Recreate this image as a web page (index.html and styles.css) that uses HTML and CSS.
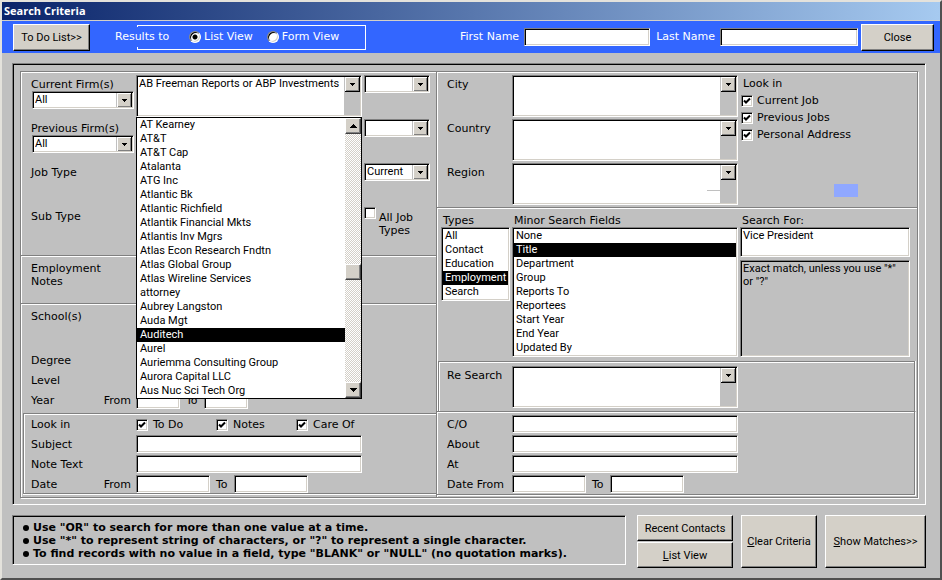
FILE: index.html
```html
<!DOCTYPE html>
<html lang="en">
<head>
    <meta charset="UTF-8">
    <meta name="viewport" content="width=device-width, initial-scale=1.0">
    <title>Search Criteria</title>
    <link rel="stylesheet" href="styles.css">
</head>
<body>
<form class="window" onsubmit="return false">
    <h1 class="title">Search Criteria</h1>

    <!-- Top bar -->
    <div class="topbar">
        <button type="button" class="btn btn-todo">To Do List&gt;&gt;</button>
        <span class="results-label" id="results-label">Results to</span>
        <div class="results" role="radiogroup" aria-labelledby="results-label">
            <label><input type="radio" name="view" checked>List View</label>
            <label><input type="radio" name="view">Form View</label>
        </div>
        <label class="name-label" for="first-name">First Name</label>
        <input type="text" class="field first-name" id="first-name">
        <label class="name-label" for="last-name">Last Name</label>
        <input type="text" class="field last-name" id="last-name">
        <button type="button" class="btn btn-close">Close</button>
    </div>

    <div class="panel">
        <div class="frame">

            <!-- Left side -->
            <div class="left">
                <div class="section jobs">
                    <div class="row tall-row">
                        <div class="firm">
                            <label for="current-mode">Current Firm(s)</label>
                            <select class="field combo" id="current-mode"><option>All</option></select>
                        </div>
                        <div class="picker">
                            <select class="field combo tall" aria-label="Current firm"><option>AB Freeman Reports or ABP Investments</option></select>
                            <div class="dropdown">
                                <ul class="firms" role="listbox" aria-label="Firms">
                                    <li role="option">AT Kearney</li>
                                    <li role="option">AT&amp;T</li>
                                    <li role="option">AT&amp;T Cap</li>
                                    <li role="option">Atalanta</li>
                                    <li role="option">ATG Inc</li>
                                    <li role="option">Atlantic Bk</li>
                                    <li role="option">Atlantic Richfield</li>
                                    <li role="option">Atlantik Financial Mkts</li>
                                    <li role="option">Atlantis Inv Mgrs</li>
                                    <li role="option">Atlas Econ Research Fndtn</li>
                                    <li role="option">Atlas Global Group</li>
                                    <li role="option">Atlas Wireline Services</li>
                                    <li role="option">attorney</li>
                                    <li role="option">Aubrey Langston</li>
                                    <li role="option">Auda Mgt</li>
                                    <li role="option" aria-selected="true">Auditech</li>
                                    <li role="option">Aurel</li>
                                    <li role="option">Auriemma Consulting Group</li>
                                    <li role="option">Aurora Capital LLC</li>
                                    <li role="option">Aus Nuc Sci Tech Org</li>
                                </ul>
                                <div class="scrollbar">
                                    <button type="button" class="scroll-btn" aria-label="Scroll up"><svg width="7" height="4" viewBox="0 0 7 4"><path d="M3 0h1v1h1v1h1v1h1v1H0V3h1V2h1V1h1z"/></svg></button>
                                    <span class="thumb"></span>
                                    <button type="button" class="scroll-btn scroll-down" aria-label="Scroll down"><svg width="7" height="4" viewBox="0 0 7 4"><path d="M0 0h7v1H6v1H5v1H4v1H3V3H2V2H1V1H0z"/></svg></button>
                                </div>
                            </div>
                        </div>
                        <select class="field combo small" aria-label="Current firm status"><option></option></select>
                    </div>
                    <div class="row tall-row">
                        <div class="firm">
                            <label for="previous-mode">Previous Firm(s)</label>
                            <select class="field combo" id="previous-mode"><option>All</option></select>
                        </div>
                        <select class="field combo tall" aria-label="Previous firm"><option></option></select>
                        <select class="field combo small" aria-label="Previous firm status"><option></option></select>
                    </div>
                    <div class="row tall-row">
                        <label for="job-type">Job Type</label>
                        <select class="field combo tall" id="job-type"><option></option></select>
                        <select class="field combo small" aria-label="Job type status"><option>Current</option></select>
                    </div>
                    <div class="row tall-row">
                        <label for="sub-type">Sub Type</label>
                        <select class="field combo tall" id="sub-type"><option></option></select>
                        <label class="all-jobs"><input type="checkbox"><span>All Job Types</span></label>
                    </div>
                </div>

                <div class="section notes">
                    <div class="row">
                        <label class="two-lines" for="emp-notes">Employment Notes</label>
                        <textarea class="field tall" id="emp-notes"></textarea>
                    </div>
                </div>

                <div class="section school">
                    <div class="row tall-row">
                        <label for="school">School(s)</label>
                        <select class="field combo tall" id="school"><option></option></select>
                    </div>
                    <div class="row">
                        <label for="degree">Degree</label>
                        <input type="text" class="field" id="degree">
                    </div>
                    <div class="row">
                        <label for="level">Level</label>
                        <input type="text" class="field" id="level">
                    </div>
                    <div class="row">
                        <div class="from-label"><span>Year</span><label for="year-from">From</label></div>
                        <div class="range">
                            <input type="text" class="field year" id="year-from">
                            <label for="year-to">To</label>
                            <input type="text" class="field year" id="year-to">
                        </div>
                    </div>
                </div>

                <div class="section note-search">
                    <div class="row">
                        <span>Look in</span>
                        <div class="checks">
                            <label><input type="checkbox" checked>To Do</label>
                            <label><input type="checkbox" checked>Notes</label>
                            <label><input type="checkbox" checked>Care Of</label>
                        </div>
                    </div>
                    <div class="row">
                        <label for="subject">Subject</label>
                        <input type="text" class="field" id="subject">
                    </div>
                    <div class="row">
                        <label for="note-text">Note Text</label>
                        <input type="text" class="field" id="note-text">
                    </div>
                    <div class="row">
                        <div class="from-label"><span>Date</span><label for="note-from">From</label></div>
                        <div class="range">
                            <input type="text" class="field date" id="note-from">
                            <label for="note-to">To</label>
                            <input type="text" class="field date" id="note-to">
                        </div>
                    </div>
                </div>
            </div>

            <!-- Right side -->
            <div class="right">
                <div class="section places">
                    <div class="place-rows">
                        <div class="row tall-row">
                            <label for="city">City</label>
                            <select class="field combo tall" id="city"><option></option></select>
                        </div>
                        <div class="row tall-row">
                            <label for="country">Country</label>
                            <select class="field combo tall" id="country"><option></option></select>
                        </div>
                        <div class="row tall-row">
                            <label for="region">Region</label>
                            <select class="field combo tall" id="region"><option></option></select>
                        </div>
                    </div>
                    <div class="look-in">
                        <span>Look in</span>
                        <label><input type="checkbox" checked>Current Job</label>
                        <label><input type="checkbox" checked>Previous Jobs</label>
                        <label><input type="checkbox" checked>Personal Address</label>
                    </div>
                    <span class="dash"></span>
                    <span class="marker"></span>
                </div>

                <div class="section fields">
                    <div>
                        <label for="types">Types</label>
                        <select class="field list" id="types" size="5">
                            <option>All</option>
                            <option>Contact</option>
                            <option>Education</option>
                            <option selected>Employment</option>
                            <option>Search</option>
                        </select>
                    </div>
                    <div>
                        <label for="minor">Minor Search Fields</label>
                        <select class="field list" id="minor" size="9">
                            <option>None</option>
                            <option selected>Title</option>
                            <option>Department</option>
                            <option>Group</option>
                            <option>Reports To</option>
                            <option>Reportees</option>
                            <option>Start Year</option>
                            <option>End Year</option>
                            <option>Updated By</option>
                        </select>
                    </div>
                    <div class="search-for">
                        <label for="search-for">Search For:</label>
                        <textarea class="field" id="search-for">Vice President</textarea>
                        <p class="field hint">Exact match, unless you use "*" or "?"</p>
                    </div>
                </div>

                <div class="section research">
                    <div class="row">
                        <label for="research">Re Search</label>
                        <select class="field combo tall" id="research"><option></option></select>
                    </div>
                </div>

                <div class="section about">
                    <div class="row">
                        <label for="care-of">C/O</label>
                        <input type="text" class="field" id="care-of">
                    </div>
                    <div class="row">
                        <label for="about">About</label>
                        <input type="text" class="field" id="about">
                    </div>
                    <div class="row">
                        <label for="at">At</label>
                        <input type="text" class="field" id="at">
                    </div>
                    <div class="row">
                        <label for="date-from">Date From</label>
                        <div class="range">
                            <input type="text" class="field date" id="date-from">
                            <label for="date-to">To</label>
                            <input type="text" class="field date" id="date-to">
                        </div>
                    </div>
                </div>
            </div>
        </div>
    </div>

    <!-- Tips and buttons -->
    <div class="footer">
        <ul class="tips">
            <li>Use "OR" to search for more than one value at a time.</li>
            <li>Use "*" to represent string of characters, or "?" to represent a single character.</li>
            <li>To find records with no value in a field, type "BLANK" or "NULL" (no quotation marks).</li>
        </ul>
        <div class="stack">
            <button type="button" class="btn">Recent Contacts</button>
            <button type="button" class="btn"><u>L</u>ist View</button>
        </div>
        <button type="button" class="btn btn-clear"><u>C</u>lear Criteria</button>
        <button type="submit" class="btn btn-show"><u>S</u>how Matches&gt;&gt;</button>
    </div>
</form>
</body>
</html>
```
FILE: styles.css
```css
* {
    box-sizing: border-box;
}
body {
    margin: 0;
    background-color: #c0c0c0;
    font-family: "DejaVu Sans", Verdana, sans-serif;
    font-size: 11px;
    line-height: 20px;
    color: #000;
}
.window {
    min-height: 100vh;
    border: 2px solid #e4e2dc;
    border-right-color: #505050;
    border-bottom-color: #505050;
}
.title {
    margin: 0;
    padding-left: 2px;
    height: 19px;
    border-bottom: 1px solid #d4d0c8;
    background: linear-gradient(to right, #0a246a, #a6caf0);
    color: #fff;
    font: bold 11px/18px "Open Sans", Tahoma, sans-serif;
}

/* Buttons */
.btn {
    padding: 0;
    border: 1px solid #fff;
    border-right-color: #000;
    border-bottom-color: #000;
    box-shadow: inset -1px -1px #808080;
    background-color: #d4d0c8;
    color: #000;
    font: 11px Roboto, Arial, sans-serif;
}

/* Sunken boxes */
.field {
    display: block;
    width: 100%;
    height: 18px;
    margin: 0;
    padding: 0 2px;
    border: 1px solid #808080;
    border-right-color: #fff;
    border-bottom-color: #fff;
    border-radius: 0;
    box-shadow: inset 1px 1px #000, inset -1px -1px #d4d0c8;
    background-color: #fff;
    color: #000;
    font: 11px/14px Roboto, Arial, sans-serif;
    outline: none;
    resize: none;
}
.combo {
    appearance: none;
    background-image:
        url("data:image/svg+xml,%3Csvg xmlns='http://www.w3.org/2000/svg' width='15' height='15' shape-rendering='crispEdges'%3E%3Cpath fill='%23000' d='M0 0h15v15H0z'/%3E%3Cpath fill='%23fff' d='M0 0h14v14H0z'/%3E%3Cpath fill='%23808080' d='M1 1h13v13H1z'/%3E%3Cpath fill='%23d4d0c8' d='M1 1h12v12H1z'/%3E%3Cpath d='M5 6h5v1H9v1H8v1H7V8H6V7H5z'/%3E%3C/svg%3E"),
        linear-gradient(#c0c0c0, #c0c0c0);
    background-repeat: no-repeat;
    background-position: right 1px top 1px, right 1px top 1px;
    background-size: 15px 15px, 16px 100%;
}
.tall {
    height: 42px;
    padding-bottom: 24px;
}
.small {
    width: 66px;
    margin-left: 2px;
}

input[type="checkbox"],
input[type="radio"] {
    appearance: none;
    flex: none;
    width: 12px;
    height: 12px;
    margin: 0;
    border: 1px solid #808080;
    border-right-color: #fff;
    border-bottom-color: #fff;
    box-shadow: inset 1px 1px #000, inset -1px -1px #d4d0c8;
    background: #fff center no-repeat;
}
input[type="checkbox"]:checked {
    background-image: url("data:image/svg+xml,%3Csvg xmlns='http://www.w3.org/2000/svg' width='8' height='8'%3E%3Cpath d='M1 3.5l2 2L7 1.500' fill='none' stroke='%23000' stroke-width='2'/%3E%3C/svg%3E");
}
input[type="radio"] {
    border-radius: 50%;
}
input[type="radio"]:checked {
    background-image: radial-gradient(circle, #000 2px, transparent 3px);
}

/* Top bar */
.topbar {
    display: flex;
    align-items: center;
    height: 32px;
    padding: 0 6px 0 11px;
    background-color: #3366ff;
    color: #fff;
}
.btn-todo {
    width: 77px;
    height: 27px;
}
.results-label {
    position: relative;
    width: 60px;
    margin-left: 25px;
    background-color: #3366ff;
    white-space: nowrap;
}
.results {
    display: flex;
    align-items: center;
    gap: 14px;
    width: 229px;
    height: 25px;
    margin-left: -38px;
    margin-right: auto;
    padding-left: 51px;
    border: 1px solid #fff;
}
.results label {
    display: flex;
    align-items: center;
    gap: 3px;
    white-space: nowrap;
}
.name-label {
    margin-right: 5px;
    white-space: nowrap;
}
.first-name {
    width: 126px;
    margin-right: 6px;
}
.last-name {
    width: 138px;
    margin-right: 3px;
}
.btn-close {
    width: 73px;
    height: 27px;
}

/* Main panel */
.panel {
    margin: 10px 14px 0 10px;
    padding: 7px 7px 6px;
    border: 1px solid #808080;
    border-right-color: #fff;
    border-bottom-color: #fff;
    box-shadow: inset 1px 1px #000;
}
.frame {
    display: grid;
    grid-template-columns: 415px 1fr;
    border: 1px solid #808080;
    box-shadow: inset 1px 1px #fff, 1px 1px #fff;
}
.right {
    border-left: 1px solid #808080;
    box-shadow: inset 1px 0 #fff;
}
.section {
    padding: 3px 0 0 10px;
    border-top: 1px solid #808080;
    box-shadow: inset 0 1px #fff;
}
.jobs,
.places {
    border-top: none;
}
.row {
    display: grid;
    grid-template-columns: 105px 226px 1fr;
    align-items: start;
}
.tall-row {
    min-height: 44px;
}
.firm {
    width: 103px;
}
.firm label {
    display: block;
    height: 16px;
}
.firm .combo {
    width: 102px;
    margin-left: 1px;
}
.from-label {
    display: flex;
    justify-content: space-between;
    padding-right: 5px;
}
.range {
    display: flex;
    gap: 6px;
}
.range .year {
    width: 44px;
}
.range .date {
    width: 74px;
}

/* Left side */
.jobs {
    height: 183px;
}
.notes {
    height: 48px;
}
.two-lines {
    width: 80px;
    padding-top: 3px;
    line-height: 13px;
}
.school {
    height: 108px;
}
.all-jobs {
    display: flex;
    gap: 3px;
    padding-left: 2px;
}
.all-jobs span {
    width: 46px;
    padding-top: 4px;
    line-height: 13px;
}
.note-search {
    height: 81px;
    margin: 2px 0 2px 2px;
    padding: 1px 0 0 7px;
    border: 1px solid #808080;
    border-right: none;
    box-shadow: inset 1px 1px #fff, 0 1px #fff;
}
.checks {
    display: flex;
}
.checks label {
    display: flex;
    flex: none;
    align-items: center;
    gap: 5px;
    width: 80px;
    white-space: nowrap;
}

/* Open list of firms, lies over the rows below */
.picker {
    position: relative;
}
.dropdown {
    position: absolute;
    top: 100%;
    left: 0;
    z-index: 1;
    display: flex;
    width: 226px;
    border: 1px solid #000;
    background-color: #fff;
}
.firms {
    flex: 1;
    margin: 0;
    padding: 0;
    list-style: none;
    font: 11px/14px Roboto, Arial, sans-serif;
}
.firms li {
    padding-left: 3px;
}
.firms li[aria-selected="true"] {
    background-color: #000;
    color: #fff;
}
.scrollbar {
    display: flex;
    flex-direction: column;
    width: 16px;
    background: repeating-conic-gradient(#fff 0 25%, #d4d0c8 0 50%) 0 0 / 2px 2px;
}
.scroll-btn,
.thumb {
    display: flex;
    align-items: center;
    justify-content: center;
    height: 16px;
    padding: 0;
    border: 1px solid #fff;
    border-right-color: #404040;
    border-bottom-color: #404040;
    box-shadow: inset -1px -1px #808080;
    background-color: #d4d0c8;
}
.thumb {
    margin-top: 130px;
}
.scroll-down {
    margin-top: auto;
}

/* Right side */
.right .row {
    grid-template-columns: 65px 226px 1fr;
}
.places {
    position: relative;
    display: flex;
    height: 135px;
}
.look-in {
    padding-left: 3px;
    line-height: 17px;
}
.look-in span {
    display: block;
    padding-left: 2px;
}
.look-in label {
    display: flex;
    align-items: center;
    gap: 4px;
}
.dash {
    position: absolute;
    top: 118px;
    right: 197px;
    width: 13px;
    height: 1px;
    background-color: #c0c0c0;
}
.marker {
    position: absolute;
    top: 112px;
    right: 59px;
    width: 24px;
    height: 13px;
    background-color: #90a8ff;
}
.fields {
    display: grid;
    grid-template-columns: 69px 226px 170px;
    column-gap: 2px;
    height: 152px;
    padding-left: 4px;
}
.fields label {
    display: block;
    height: 16px;
    padding-left: 2px;
}
.list {
    height: auto;
    padding: 1px;
    overflow: hidden;
}
.list option {
    height: 14px;
    min-height: 14px;
    padding: 0 2px;
    line-height: 14px;
}
.list option:checked {
    background: #000 linear-gradient(#000, #000);
    color: #fff;
}
.search-for .field {
    height: 30px;
    padding-top: 1px;
    overflow: hidden;
}
.search-for .hint {
    height: 97px;
    margin-top: 3px;
    background-color: #c0c0c0;
    line-height: 13px;
}
.research {
    height: 50px;
    margin: 2px 2px 0 1px;
    padding: 4px 0 0 8px;
    border: 1px solid #808080;
    border-bottom: none;
    box-shadow: inset 1px 1px #fff, 1px 0 #fff;
}
.about {
    height: 84px;
    margin: 0 2px 2px 0;
    padding-left: 10px;
    border-right: 1px solid #808080;
    border-bottom: 1px solid #808080;
    box-shadow: inset 0 1px #fff, 1px 1px #fff;
}

/* Footer */
.footer {
    display: flex;
    gap: 8px;
    margin: 10px 14px 9px 10px;
}
.tips {
    flex: 1;
    height: 50px;
    margin: 0 3px 0 0;
    padding: 5px 0 0 10px;
    border: 1px solid #808080;
    border-right-color: #fff;
    border-bottom-color: #fff;
    box-shadow: inset 1px 1px #000;
    list-style: none;
    font-weight: bold;
    line-height: 13px;
    white-space: nowrap;
}
.tips li {
    display: flex;
    align-items: center;
    gap: 4px;
}
.tips li::before {
    content: "";
    width: 6px;
    height: 6px;
    border-radius: 50%;
    background-color: #000;
}
.stack {
    display: grid;
    gap: 1px;
    width: 96px;
}
.btn-clear {
    width: 76px;
    height: 53px;
}
.btn-show {
    width: 101px;
    height: 53px;
}
```
